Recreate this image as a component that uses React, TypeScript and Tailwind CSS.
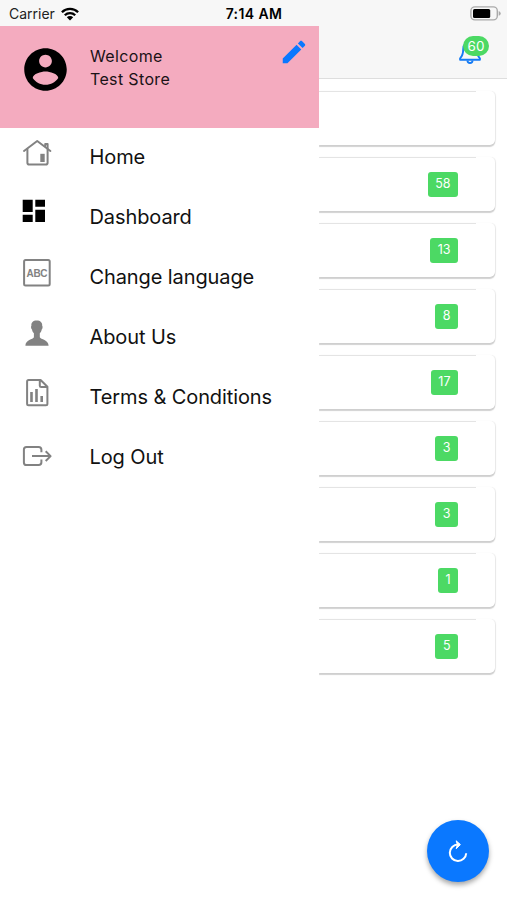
import type { ReactNode } from "react";

type MenuItem = { label: string; icon: ReactNode };

const menuItems: MenuItem[] = [
  {
    label: "Home",
    icon: (
      <g fill="none" stroke="#828282" strokeWidth="2" strokeLinejoin="round" strokeLinecap="round">
        <path d="M3 17 16.2 7 29.400 17" />
        <path d="M6.400 15.200v13.600q0 1.800 1.800 1.800h16.600q1.800 0 1.800-1.800V15.200M24.200 12V10h2.400v4.800" />
        <path d="M19.300 19.800h4.400v8.200h-4.400z" fill="#828282" stroke="none" />
      </g>
    ),
  },
  {
    label: "Dashboard",
    icon: <path d="M1.700 5.700h10V18h-10zM1.700 20.700h10V28h-10zM14.300 5.700H24v7h-9.700zM14.300 15.700H24V28h-9.700z" />,
  },
  {
    label: "Change language",
    icon: (
      <g>
        <rect x="3.100" y="5.900" width="25.600" height="25.600" rx="1.500" fill="none" stroke="#828282" strokeWidth="2" />
        <text x="16" y="22.500" textAnchor="middle" textLength="21" fontSize="10" fontWeight="700" fill="#828282" className="font-['Liberation_Sans',sans-serif]">
          ABC
        </text>
      </g>
    ),
  },
  {
    label: "About Us",
    icon: (
      <path
        fill="#828282"
        d="M15.700 6.500c-3.700 0-5.600 2-5.300 5.300-.7.500-.4 3.200.6 3.700.3 1.800.9 2.900 1.900 3.800v3.900c-.8 2.300-8.500 2.300-8.500 8.600h23.200c0-6.300-7.900-6.300-8.800-8.600v-3.900c1-.9 1.600-2 1.900-3.800 1-.5 1.200-3.200.5-3.700.2-3.300-1.800-5.300-5.500-5.300z"
      />
    ),
  },
  {
    label: "Terms & Conditions",
    icon: (
      <g fill="none" stroke="#828282" strokeWidth="2" strokeLinejoin="round">
        <path d="M7.600 6h12l6.800 6.700v17q0 1.500-1.500 1.500H7.600q-1.500 0-1.500-1.500V7.500Q6.100 6 7.600 6zM18.800 6v5.700q0 1.400 1.400 1.400h6" />
        <path d="M10.500 18v10M15.500 15v13M20.700 22v6" strokeWidth="2.600" />
      </g>
    ),
  },
  {
    label: "Log Out",
    icon: (
      <g fill="none" stroke="#828282" strokeWidth="2" strokeLinejoin="round">
        <path d="M20.400 18.300v-2.600q0-2.800-2.800-2.800H5.500q-2.600 0-2.600 2.600v12.900q0 2.600 2.600 2.600h12.100q2.800 0 2.800-2.800v-2.600" />
        <path d="M11 22.100h18.500M24.700 17.200l4.900 4.900-4.900 4.900" />
      </g>
    ),
  },
];

const counts: (number | null)[] = [null, 58, 13, 8, 17, 3, 3, 1, 5];

function StatusBar() {
  return (
    <div className="grid h-[26px] shrink-0 grid-cols-3 items-center bg-[#f7f7f7] text-[14px] text-[#222]">
      <div className="flex items-center gap-[6px] pl-[9px] pt-px">
        <span>Carrier</span>
        <svg width="18" height="14" viewBox="0 0 18 14" fill="none" stroke="#000" strokeWidth="2.300">
          <path d="M.9 5.200a11.500 11.500 0 0 1 16.200 0M3.800 8.200a7.400 7.400 0 0 1 10.400 0" />
          <path d="M9 13.600 5.800 10.300a4.600 4.600 0 0 1 6.400 0z" fill="#000" stroke="none" />
        </svg>
      </div>
      <div className="pl-px pt-px text-center font-semibold tracking-[0.4px] text-black">7:14 AM</div>
      <div className="flex justify-end pr-[6px]">
        <svg width="31" height="15" viewBox="0 0 31 15">
          <rect x=".9" y=".9" width="26.400" height="13" rx="4" fill="none" stroke="#aaa" strokeWidth="1.400" />
          <rect x="3" y="2.900" width="17.200" height="9" rx="1.500" />
          <path d="M28.700 5v4.800q2-.8 2-2.400T28.700 5z" fill="#aaa" />
        </svg>
      </div>
    </div>
  );
}

function Drawer() {
  return (
    <aside className="flex w-[319px] shrink-0 flex-col bg-white">
      <div className="flex h-[102px] items-start bg-[#f4abbf]">
        <svg className="ml-[20px] mt-[18px]" width="51" height="51" viewBox="0 0 24 24">
          <path d="M12 2C6.480 2 2 6.480 2 12s4.480 10 10 10 10-4.480 10-10S17.520 2 12 2zm0 3c1.660 0 3 1.340 3 3s-1.340 3-3 3-3-1.340-3-3 1.340-3 3-3zm0 14.200c-2.500 0-4.710-1.280-6-3.220.03-1.990 4-3.080 6-3.080 1.990 0 5.970 1.090 6 3.080-1.290 1.940-3.500 3.220-6 3.220z" />
        </svg>
        <div className="ml-[19px] mt-[19px] flex-1 text-[16px] leading-[23px] tracking-[0.35px] text-[#1a1216]">
          <p>Welcome</p>
          <p>Test Store</p>
        </div>
        <svg className="mr-[10px] mt-[11px]" width="30" height="30" viewBox="0 0 24 24" fill="#0a78ff">
          <path d="M3 17.250V21h3.750L17.810 9.940l-3.750-3.750L3 17.250zM20.710 7.040c.39-.39.39-1.020 0-1.410l-2.340-2.340c-.39-.39-1.020-.39-1.410 0l-1.830 1.830 3.750 3.750 1.830-1.830z" />
        </svg>
      </div>
      <nav>
        {menuItems.map((item) => (
          <div key={item.label} className="flex h-[60px] items-start pl-[21px] pt-[6px]">
            <svg width="32" height="40" viewBox="0 0 32 40">
              {item.icon}
            </svg>
            <span className="ml-[36.5px] mt-[8px] whitespace-nowrap text-[20px] leading-[30px] tracking-[-0.1px] text-[#111]">
              {item.label}
            </span>
          </div>
        ))}
      </nav>
    </aside>
  );
}

function OrderList() {
  return (
    <div className="flex flex-col gap-3 pr-3 pt-3">
      {counts.map((count, i) => (
        <div
          key={i}
          className="flex h-[54px] flex-col rounded-r-[5px] bg-white shadow-[0_2px_1px_rgba(0,0,0,0.18),1px_0_1px_rgba(0,0,0,0.08)]"
        >
          <div className="mr-[19px] h-px bg-[#e4e4e4]" />
          <div className="flex flex-1 items-center justify-end pr-[37px]">
            {count !== null && (
              <span className="flex h-[25px] items-center rounded-[3px] bg-[#4cd964] px-[7.5px] text-[12.5px] text-white">
                {count}
              </span>
            )}
          </div>
        </div>
      ))}
    </div>
  );
}

export default function App() {
  return (
    <div className="relative flex h-[900px] w-[507px] flex-col overflow-hidden bg-white font-[Inter,sans-serif]">
      <StatusBar />
      <div className="flex flex-1">
        <Drawer />
        <main className="flex-1 overflow-hidden">
          <header className="flex h-[53px] justify-end border-b border-[#dedede] bg-[#f7f7f7] pr-[26px] pt-[14px]">
            <div className="relative h-6 w-[22px]">
              <svg width="22" height="24" viewBox="0 0 22 24" fill="none" stroke="#147bf5" strokeWidth="1.900" strokeLinejoin="round">
                <path d="M11 2.500c-4.800 0-6.800 3-6.800 6.700 0 5.500-1 7-3.100 9.100v1.400h19.800v-1.400c-2.100-2.100-3.100-3.600-3.100-9.100 0-3.700-2-6.700-6.800-6.700z" />
                <path d="M8.500 20.500a2.500 2.500 0 0 0 5 0" />
              </svg>
              <span className="absolute -top-1 left-1 flex h-5 w-[26px] items-center justify-center rounded-full bg-[#4cd964] text-[13.5px] text-white">
                60
              </span>
            </div>
          </header>
          <OrderList />
        </main>
      </div>
      <button className="absolute bottom-[18px] right-[18px] flex size-[62px] items-center justify-center rounded-full bg-[#0a78ff] shadow-[0_3px_5px_rgba(0,0,0,0.35)]">
        <svg width="20" height="24" viewBox="0 0 20 24" fill="none" stroke="#fff" strokeWidth="2">
          <path d="M11.500 5.600H10a8.200 8.200 0 1 0 8.200 8.600" />
          <path d="M8.200 1.800 12.400 5.600 8.200 9.800l1.200-4z" fill="#fff" strokeWidth="1" />
        </svg>
      </button>
    </div>
  );
}
